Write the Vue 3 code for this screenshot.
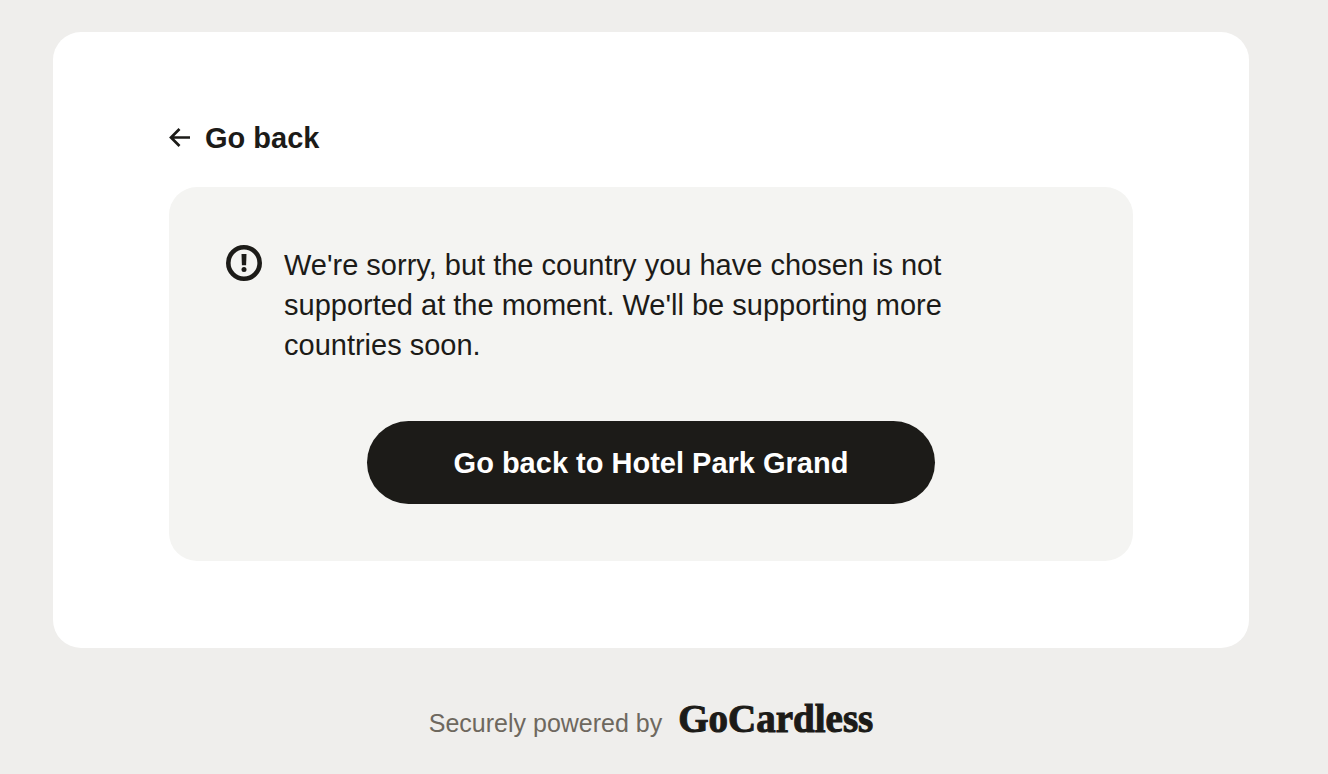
<script setup>
const merchant = 'Hotel Park Grand'
</script>

<template>
  <div class="page">
    <main class="card">
      <a class="back" href="#">
        <svg class="arrow" viewBox="0 0 22 20" aria-hidden="true">
          <path d="M21 9.500H2M10.500 1L2 9.500l8.500 8.500" />
        </svg>
        <span>Go back</span>
      </a>
      <section class="notice">
        <div class="message">
          <svg class="alert" viewBox="0 0 36 36" aria-hidden="true">
            <circle class="ring" cx="18" cy="18" r="15.700" />
            <path d="M15.500 9h5l-.4 11.200h-4.200z" />
            <circle cx="18" cy="24.600" r="2.500" />
          </svg>
          <p>We're sorry, but the country you have chosen is not supported at the moment. We'll be supporting more countries soon.</p>
        </div>
        <button class="primary" type="button">Go back to {{ merchant }}</button>
      </section>
    </main>
    <footer class="footer">
      <span>Securely powered by</span>
      <span class="brand">GoCardless</span>
    </footer>
  </div>
</template>

<style>
body {
  background: #efeeec;
}
</style>

<style scoped>
.page {
  padding: 32px 79px 32px 53px;
  font-family: "Liberation Sans", Arial, sans-serif;
  color: #1c1b18;
}
.card {
  padding: 86px 116px 87px;
  border-radius: 28px;
  background: #fff;
}
.back {
  display: inline-flex;
  align-items: center;
  gap: 14px;
  color: inherit;
  font-size: 29px;
  font-weight: 700;
  line-height: 40px;
  text-decoration: none;
}
.arrow {
  width: 22px;
  height: 20px;
  fill: none;
  stroke: currentColor;
  stroke-width: 2.7;
}
.notice {
  margin-top: 29px;
  padding: 58px 57px 57px;
  border-radius: 28px;
  background: #f4f4f2;
}
.message {
  display: flex;
  align-items: flex-start;
  gap: 22px;
}
.alert {
  flex: none;
  width: 36px;
  height: 36px;
  fill: currentColor;
}
.ring {
  fill: none;
  stroke: currentColor;
  stroke-width: 4.6;
}
.message p {
  max-width: 700px;
  margin: 0;
  font-size: 29px;
  line-height: 40px;
}
.primary {
  display: block;
  margin: 56px auto 0;
  padding: 23px 87px 21px;
  border: 0;
  border-radius: 42px;
  background: #1c1b18;
  color: #fff;
  font: inherit;
  font-size: 29px;
  font-weight: 700;
  line-height: 39px;
}
.footer {
  display: flex;
  justify-content: center;
  align-items: baseline;
  gap: 16px;
  margin-top: 51px;
  color: #6e685e;
  font-size: 25px;
  line-height: 40px;
}
.brand {
  color: #1c1b18;
  font-family: "Liberation Serif", "Times New Roman", serif;
  font-size: 39px;
  font-weight: 700;
  -webkit-text-stroke: 1px currentColor;
}
</style>
